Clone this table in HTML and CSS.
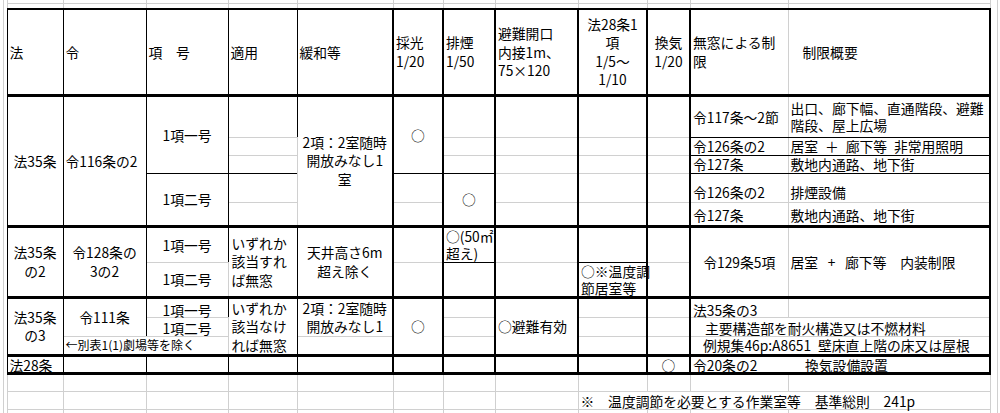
FILE: index.html
```html
<!DOCTYPE html>
<html lang="ja">
<head>
<meta charset="utf-8">
<title>無窓規定 一覧</title>
<link rel="stylesheet" href="styles.css">
</head>
<body>
<table class="sheet">
  <colgroup>
    <col class="w-edge0"><col class="w-edge1">
    <col class="w-ho"><col class="w-rei"><col class="w-kou"><col class="w-tekiyo"><col class="w-kanwa">
    <col class="w-saiko"><col class="w-haien"><col class="w-hinan"><col class="w-ho28"><col class="w-kanki">
    <col class="w-musou"><col class="w-gaiyo">
    <col class="w-edge2"><col class="w-edge3">
  </colgroup>
  <tr class="h-r0">
    <td class="edge0" rowspan="17"></td>
    <td class="edge1" rowspan="2"></td>
    <td class="top"></td><td class="top"></td><td class="top"></td><td class="top"></td><td class="top"></td><td class="top"></td>
    <td class="top"></td><td class="top"></td><td class="top"></td><td class="top"></td><td class="top"></td><td class="top"></td>
    <td class="edge2" rowspan="17"></td>
    <td class="edge3" rowspan="17"></td>
  </tr>
  <tr class="h-r1">
    <td></td><td></td><td></td><td></td><td></td><td></td><td></td><td></td><td></td><td></td><td></td><td></td>
  </tr>
  <tr class="h-head">
    <td class="edge1 frame-left" rowspan="12"></td>
    <td class="head vr">法</td>
    <td class="head vr">令</td>
    <td class="head vr">項　号</td>
    <td class="head vr">適用</td>
    <td class="head vr-bold">緩和等</td>
    <td class="head vr-bold">採光<br>1/20</td>
    <td class="head vr-bold">排煙<br>1/50</td>
    <td class="head vr-bold">避難開口<br>内接1m、<br>75×120</td>
    <td class="head vr-bold ctr">法28条1<br>項<br>1/5～<br>1/10</td>
    <td class="head vr-bold ctr">換気<br>1/20</td>
    <td class="head">無窓による制<br>限</td>
    <td class="head vr-bold indent-head">制限概要</td>
  </tr>
  <!-- 法35条 -->
  <tr class="h-42">
    <td class="vr hr-bold ctr" rowspan="5">法35条</td>
    <td class="vr hr-bold" rowspan="5">令116条の2</td>
    <td class="vr hr ctr" rowspan="3">1項一号</td>
    <td class="vr"></td>
    <td class="vr-bold hr-bold ctr multi" rowspan="5">2項：2室随時<br>開放みなし1<br>室</td>
    <td class="vr-bold hr ctr" rowspan="3">○</td>
    <td class="vr-bold"></td>
    <td class="vr-bold"></td>
    <td class="vr-bold"></td>
    <td class="vr-bold"></td>
    <td class="hr">令117条～2節</td>
    <td class="vr-bold hr tight">出口、廊下幅、直通階段、避難<br>階段、屋上広場</td>
  </tr>
  <tr class="h-18">
    <td class="vr"></td>
    <td class="vr-bold"></td>
    <td class="vr-bold"></td>
    <td class="vr-bold"></td>
    <td class="vr-bold"></td>
    <td class="hr">令126条の2</td>
    <td class="vr-bold hr">居室&ensp;＋&ensp;廊下等&ensp;非常用照明</td>
  </tr>
  <tr class="h-18">
    <td class="vr hr"></td>
    <td class="vr-bold hr"></td>
    <td class="vr-bold"></td>
    <td class="vr-bold"></td>
    <td class="vr-bold"></td>
    <td class="hr">令127条</td>
    <td class="vr-bold hr">敷地内通路、地下街</td>
  </tr>
  <tr class="h-29">
    <td class="vr hr-bold ctr" rowspan="2">1項二号</td>
    <td class="vr"></td>
    <td class="vr-bold"></td>
    <td class="vr-bold hr-bold ctr" rowspan="2">○</td>
    <td class="vr-bold"></td>
    <td class="vr-bold"></td>
    <td class="vr-bold"></td>
    <td class="low">令126条の2</td>
    <td class="vr-bold low">排煙設備</td>
  </tr>
  <tr class="h-24">
    <td class="vr hr-bold"></td>
    <td class="vr-bold hr-bold"></td>
    <td class="vr-bold hr-bold"></td>
    <td class="vr-bold hr-bold"></td>
    <td class="vr-bold hr-bold"></td>
    <td class="hr-bold low">令127条</td>
    <td class="vr-bold hr-bold low">敷地内通路、地下街</td>
  </tr>
  <!-- 法35条の2 -->
  <tr class="h-36">
    <td class="vr hr-bold ctr multi" rowspan="2">法35条<br>の2</td>
    <td class="vr hr-bold ctr multi" rowspan="2">令128条の<br>3の2</td>
    <td class="vr ctr">1項一号</td>
    <td class="vr hr-bold multi pad-l" rowspan="2">いずれか<br>該当すれ<br>ば無窓</td>
    <td class="vr-bold hr-bold ctr multi" rowspan="2">天井高さ6m<br>超え除く</td>
    <td class="vr-bold"></td>
    <td class="vr-bold hr"><div class="stack">○(50㎡<br>超え)</div></td>
    <td class="vr-bold"></td>
    <td class="vr-bold hr"></td>
    <td class="vr-bold"></td>
    <td class="hr-bold ctr" rowspan="2">令129条5項</td>
    <td class="vr-bold hr-bold" rowspan="2">居室&ensp;&thinsp;+&thinsp;&ensp;廊下等&emsp;内装制限</td>
  </tr>
  <tr class="h-35">
    <td class="vr hr-bold ctr">1項二号</td>
    <td class="vr-bold hr-bold"></td>
    <td class="vr-bold hr-bold"></td>
    <td class="vr-bold hr-bold"></td>
    <td class="vr-bold hr-bold"><div class="stack stack-low">○※温度調<br>節居室等</div></td>
    <td class="vr-bold hr-bold"></td>
  </tr>
  <!-- 法35条の3 -->
  <tr class="h-19">
    <td class="vr hr-bold ctr multi" rowspan="3">法35条<br>の3</td>
    <td class="vr ctr" rowspan="2">令111条</td>
    <td class="vr ctr drop">1項一号</td>
    <td class="vr hr-bold multi pad-l" rowspan="3">いずれか<br>該当なけ<br>れば無窓</td>
    <td class="vr-bold ctr multi" rowspan="2">2項：2室随時<br>開放みなし1</td>
    <td class="vr-bold hr-bold ctr" rowspan="3">○</td>
    <td class="vr-bold"></td>
    <td class="vr-bold hr-bold" rowspan="3">○避難有効</td>
    <td class="vr-bold"></td>
    <td class="vr-bold"></td>
    <td class="drop">法35条の3</td>
    <td class="vr-bold"></td>
  </tr>
  <tr class="h-19">
    <td class="vr ctr drop-sm">1項二号</td>
    <td class="vr-bold"></td>
    <td class="vr-bold"></td>
    <td class="vr-bold"></td>
    <td class="vr-bold indent-l drop-sm" colspan="2">主要構造部を耐火構造又は不燃材料</td>
  </tr>
  <tr class="h-19">
    <td class="vr hr-bold note-small" colspan="2">←別表1(1)劇場等を除く</td>
    <td class="vr-bold hr-bold"></td>
    <td class="vr-bold hr-bold"></td>
    <td class="vr-bold hr-bold"></td>
    <td class="vr-bold hr-bold"></td>
    <td class="vr-bold hr-bold indent-m" colspan="2">例規集46p:A8651&ensp;壁床直上階の床又は屋根</td>
  </tr>
  <!-- 法28条 -->
  <tr class="h-18">
    <td class="vr hr-bold">法28条</td>
    <td class="vr hr-bold"></td>
    <td class="vr hr-bold"></td>
    <td class="vr hr-bold"></td>
    <td class="vr-bold hr-bold"></td>
    <td class="vr-bold hr-bold"></td>
    <td class="vr-bold hr-bold"></td>
    <td class="vr-bold hr-bold"></td>
    <td class="vr-bold hr-bold"></td>
    <td class="vr-bold hr-bold ctr">○</td>
    <td class="vr-bold hr-bold" colspan="2"><span class="law-ref">令20条の2</span>換気設備設置</td>
  </tr>
  <!-- below the table -->
  <tr class="h-18">
    <td class="edge1" rowspan="3"></td>
    <td></td><td></td><td></td><td></td><td></td><td></td><td></td><td></td><td></td><td></td><td></td><td></td>
  </tr>
  <tr class="h-18">
    <td></td><td></td><td></td><td></td><td></td><td></td><td></td><td></td>
    <td colspan="4">※　温度調節を必要とする作業室等　基準総則　241p</td>
  </tr>
  <tr class="h-r16">
    <td class="bottom"></td><td class="bottom"></td><td class="bottom"></td><td class="bottom"></td><td class="bottom"></td><td class="bottom"></td>
    <td class="bottom"></td><td class="bottom"></td><td class="bottom"></td><td class="bottom"></td><td class="bottom"></td><td class="bottom"></td>
  </tr>
</table>
</body>
</html>
```

FILE: styles.css
```css
html, body {
  margin: 0;
  padding: 0;
  background: #ffffff;
}

body {
  width: 1000px;
  height: 413px;
  overflow: hidden;
  font-family: "Noto Sans CJK JP", "Noto Sans", sans-serif;
  font-size: 13.8px;
  color: #000000;
}

.sheet {
  border-collapse: collapse;
  table-layout: fixed;
  width: 1000px;
}

.sheet td {
  border: 1px solid #d0d0d0;
  padding: 0 2px;
  line-height: 14px;
  white-space: nowrap;
  vertical-align: middle;
  text-align: left;
  overflow: visible;
}

/* column widths */
.w-edge0 { width: 3px; }
.w-edge1 { width: 4px; }
.w-ho { width: 56px; }
.w-rei { width: 83px; }
.w-kou { width: 82px; }
.w-tekiyo { width: 69px; }
.w-kanwa { width: 96px; }
.w-saiko { width: 50px; }
.w-haien { width: 52px; }
.w-hinan { width: 83px; }
.w-ho28 { width: 69px; }
.w-kanki { width: 43px; }
.w-musou { width: 98px; }
.w-gaiyo { width: 202px; }
.w-edge2 { width: 7px; }
.w-edge3 { width: 3px; }

/* row heights */
.h-r0 { height: 3px; }
.h-r1 { height: 6px; }
.h-head { height: 86px; }
.h-42 { height: 42px; }
.h-18 { height: 18px; }
.h-29 { height: 29px; }
.h-24 { height: 24px; }
.h-36 { height: 36px; }
.h-35 { height: 35px; }
.h-19 { height: 19px; }
.h-r16 { height: 5px; }

/* sheet edges */
.sheet td.edge0 {
  border: none;
  border-right: 1px solid #d0d0d0;
  padding: 0;
}
.sheet td.edge1 {
  border-top: none;
  border-bottom: none;
  border-left: none;
  border-right: 1px solid #d0d0d0;
  padding: 0;
}
.sheet td.frame-left {
  border-right: 1px solid #000000;
}
.sheet td.edge2 {
  border: none;
  border-right: 1px solid #d0d0d0;
  padding: 0;
}
.sheet td.edge3 {
  border: none;
  padding: 0;
}
.sheet td.top { border-top: none; }
.sheet td.bottom { border-bottom: none; }

/* ruled lines */
.sheet td.vr { border-right: 1px solid #000000; }
.sheet td.vr-bold { border-right: 2px solid #000000; }
.sheet td.hr { border-bottom: 1px solid #000000; }
.sheet td.hr-bold { border-bottom: 3px solid #000000; }

/* header */
.sheet td.head {
  border-top: 2px solid #000000;
  border-bottom: 3px solid #000000;
  line-height: 18.5px;
}
.sheet td.indent-head { padding-left: 14px; }

/* text placement */
.sheet td.ctr { text-align: center; }
.sheet td.multi { line-height: 18.5px; }
.sheet td.tight { line-height: 17px; }
.sheet td.pad-l { padding-left: 3px; }
.sheet td.low {
  vertical-align: bottom;
  padding-bottom: 3px;
}
.sheet td.drop { padding-top: 4px; }
.sheet td.drop-sm { padding-top: 2px; }
.sheet td.indent-l { padding-left: 14px; }
.sheet td.indent-m { padding-left: 12px; }
.sheet td.note-small {
  font-size: 12px;
  padding-left: 2px;
}

.stack {
  height: 30px;
  line-height: 17px;
  display: flex;
  flex-direction: column;
  justify-content: center;
}
.stack-low {
  line-height: 16.5px;
  padding-top: 1px;
  box-sizing: border-box;
}

.law-ref {
  display: inline-block;
  width: 112px;
}
```
